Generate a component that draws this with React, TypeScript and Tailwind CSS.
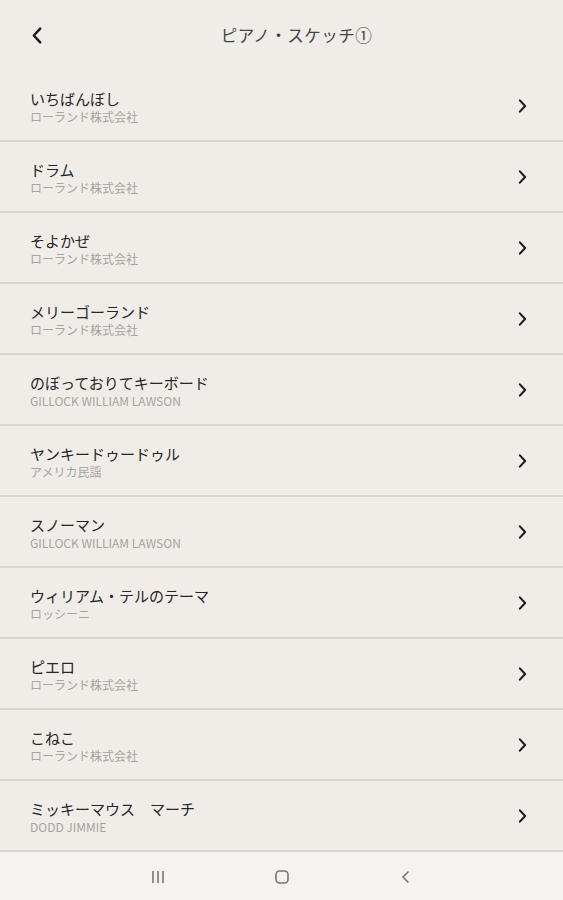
import React from 'react';

const songs = [
    { title: 'いちばんぼし', sub: 'ローランド株式会社' },
    { title: 'ドラム', sub: 'ローランド株式会社' },
    { title: 'そよかぜ', sub: 'ローランド株式会社' },
    { title: 'メリーゴーランド', sub: 'ローランド株式会社' },
    { title: 'のぼっておりてキーボード', sub: 'GILLOCK WILLIAM LAWSON' },
    { title: 'ヤンキードゥードゥル', sub: 'アメリカ民謡' },
    { title: 'スノーマン', sub: 'GILLOCK WILLIAM LAWSON' },
    { title: 'ウィリアム・テルのテーマ', sub: 'ロッシーニ' },
    { title: 'ピエロ', sub: 'ローランド株式会社' },
    { title: 'こねこ', sub: 'ローランド株式会社' },
    { title: 'ミッキーマウス　マーチ', sub: 'DODD JIMMIE' },
];

const Chevron: React.FC<{ dir: 'left' | 'right'; className?: string }> = ({ dir, className }) => (
    <svg viewBox="0 0 10 16" className={className} fill="none">
        <path
            d={dir === 'left' ? 'M8 1.5 L2 8 L8 14.5' : 'M2 1.5 L8 8 L2 14.5'}
            stroke="currentColor"
            strokeWidth="2.3"
            strokeLinecap="round"
            strokeLinejoin="round"
        />
    </svg>
);

const App: React.FC = () => {
    return (
        <div
            className="flex flex-col h-[900px] w-full bg-[#f0ede8] overflow-hidden"
            style={{ fontFamily: '"Noto Sans CJK JP", "Noto Sans", sans-serif' }}
        >
            <header className="h-[71px] flex items-center shrink-0">
                <button className="w-[74px] h-full flex items-center pl-[31px] text-[#1a1a1a]">
                    <Chevron dir="left" className="w-[12px] h-[17px]" />
                </button>
                <h1 className="flex-1 text-center pr-[44px] text-[16.5px] text-[#444] tracking-[0.5px]">
                    ピアノ・スケッチ①
                </h1>
            </header>

            <ul className="flex-1">
                {songs.map((s) => (
                    <li
                        key={s.title}
                        className="h-[71px] flex items-center border-b-2 border-[#d8d5d0] pl-[30px] pr-[36px]"
                    >
                        <div className="flex-1 flex flex-col pt-[2px]">
                            <span className="text-[15px] leading-[19px] text-[#262626]">{s.title}</span>
                            <span className="text-[12px] leading-[17px] text-[#a6a4a0]">{s.sub}</span>
                        </div>
                        <Chevron dir="right" className="w-[9px] h-[14px] text-[#1a1a1a]" />
                    </li>
                ))}
            </ul>

            <nav className="h-[48px] shrink-0 bg-[#f4f3f1] flex items-center justify-center text-[#777]">
                <div className="flex items-center gap-[108px] pt-[2px]">
                    <svg viewBox="0 0 16 16" className="w-[16px] h-[16px]">
                        <path d="M3 2v12M8 2v12M13 2v12" stroke="currentColor" strokeWidth="1.6" />
                    </svg>
                    <svg viewBox="0 0 16 16" className="w-[16px] h-[16px]">
                        <rect x="2" y="2" width="12" height="12" rx="3.5" stroke="currentColor" strokeWidth="1.6" fill="none" />
                    </svg>
                    <svg viewBox="0 0 16 16" className="w-[16px] h-[16px]">
                        <path d="M10.5 2.5 L5 8 L10.5 13.5" stroke="currentColor" strokeWidth="1.6" fill="none" />
                    </svg>
                </div>
            </nav>
        </div>
    );
};

export default App;
